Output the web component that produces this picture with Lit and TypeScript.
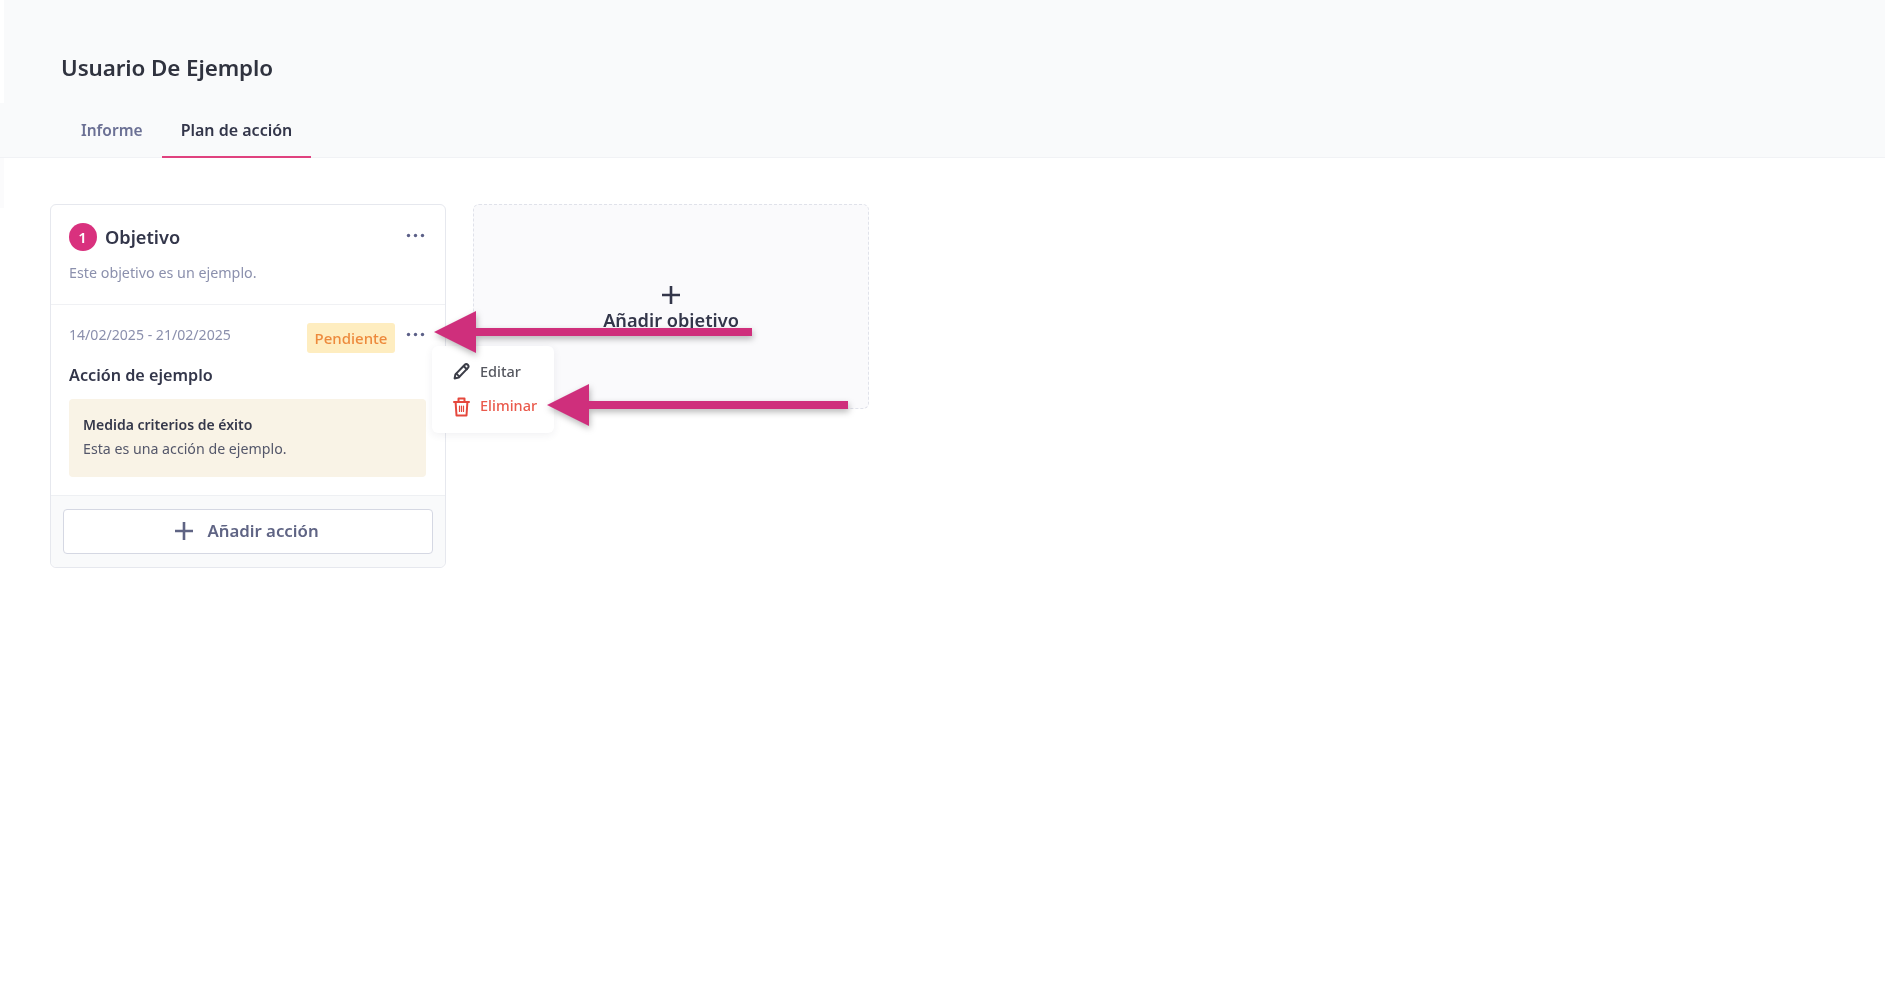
import { LitElement, html, css } from "lit";
import { customElement } from "lit/decorators.js";

const dots = html`<svg class="dots" width="19" height="5" viewBox="0 0 19 5"><circle cx="2.5" cy="2.5" r="1.7"/><circle cx="9.5" cy="2.5" r="1.7"/><circle cx="16.5" cy="2.5" r="1.7"/></svg>`;

const plus = (size: number) => html`<svg width=${size} height=${size} viewBox="0 0 18 18" fill="none" stroke="currentColor" stroke-width="2.6"><path d="M9 0v18M0 9h18"/></svg>`;

const pencil = html`<svg width="18" height="18" viewBox="0 0 18 18" fill="none" stroke="currentColor" stroke-width="2" stroke-linejoin="round" stroke-linecap="round"><path d="M1.6 16.4l.8-4 8.9-9.2c1.1-1.1 2.6-1.3 3.5-.4s.8 2.5-.3 3.6L5.7 15.5z"/><path d="M3.4 11.6l3 3M10.8 4.2l3 3"/></svg>`;

const trash = html`<svg width="17" height="20" viewBox="0 0 17 20" fill="none" stroke="currentColor" stroke-width="2" stroke-linejoin="round" stroke-linecap="round"><path d="M1 5h15M5.5 5V1.5h6V5"/><path d="M2.6 5l.9 13.5h10l.9-13.5"/><path d="M6.5 9v5.5M8.5 9v5.5M10.5 9v5.5" stroke-width="1.2"/></svg>`;

const arrow = (w: number) => html`<svg class="arrow-svg" width=${w} height="42" viewBox="0 0 ${w} 42"><path fill="#cf2f7c" d="M0 21 L42 0 V17 H${w} V25 H42 V42 Z"/></svg>`;

@customElement("app-root")
export class AppRoot extends LitElement {
  static styles = css`
    :host {
      display: block;
      position: relative;
      min-height: 992px;
      background: #fff;
      font-family: "Noto Sans", "Open Sans", sans-serif;
      color: #2f3241;
      filter: blur(0.7px);
      overflow: hidden;
    }
    .header {
      position: relative;
      background: #f9fafb;
      height: 158px;
      box-sizing: border-box;
      padding: 53px 0 0 4px;
      border-bottom: 1px solid #f1f2f5;
    }
    .header::before {
      content: "";
      position: absolute;
      left: 0;
      top: 0;
      width: 4px;
      height: 103px;
      background: #fff;
    }
    h1 {
      margin: 0 0 0 57px;
      font-size: 22.4px;
      line-height: 30px;
      font-weight: 600;
      color: #30333f;
      letter-spacing: -0.1px;
    }
    .tabs {
      display: flex;
      margin: 29px 0 0 58px;
    }
    .tab {
      box-sizing: border-box;
      height: 46px;
      padding: 6px 19px 0;
      font-size: 15.5px;
      line-height: 24px;
      font-weight: 600;
      color: #6b7094;
    }
    .tab.active {
      font-size: 16px;
      color: #33364a;
      border-bottom: 2px solid #e0417f;
    }
    .main {
      position: relative;
      display: flex;
      align-items: flex-start;
      gap: 27px;
      padding: 46px 0 0 50px;
    }
    .main::before {
      content: "";
      position: absolute;
      left: 0;
      top: 0;
      width: 4px;
      height: 50px;
      background: #fbfbfc;
    }
    .card {
      position: relative;
      box-sizing: border-box;
      width: 396px;
      background: #fff;
      border: 1px solid #e6e8ee;
      border-radius: 6px;
    }
    .card-head {
      padding: 18px 18px 22px;
      border-bottom: 1px solid #f0f1f4;
    }
    .row {
      display: flex;
      align-items: center;
    }
    .num {
      width: 28px;
      height: 28px;
      border-radius: 50%;
      background: #d9317e;
      color: #fff;
      font-size: 15px;
      font-weight: 600;
      display: flex;
      align-items: center;
      justify-content: center;
      padding-right: 1px;
      box-sizing: border-box;
    }
    .obj {
      margin-left: 8px;
      flex: 1;
      font-size: 18.2px;
      line-height: 28px;
      font-weight: 600;
      color: #33364a;
    }
    .dots {
      fill: #5c6088;
      display: block;
    }
    .head-dots {
      margin: -4px 2px 0 0;
    }
    .desc {
      margin-top: 13px;
      font-size: 14.3px;
      line-height: 18px;
      color: #8b90ad;
    }
    .action {
      padding: 18px 20px 18px 18px;
    }
    .date-row {
      display: flex;
      align-items: flex-start;
    }
    .date {
      flex: 1;
      font-size: 14.1px;
      line-height: 23px;
      color: #8b90ad;
    }
    .badge {
      box-sizing: border-box;
      height: 30px;
      width: 88px;
      padding-bottom: 1px;
      background: #feedc0;
      border-radius: 3px;
      color: #ed8a3c;
      font-size: 15px;
      font-weight: 500;
      display: flex;
      align-items: center;
      justify-content: center;
    }
    .date-row .dots {
      margin: 9px 0 0 11px;
    }
    .title {
      margin-top: 10px;
      font-size: 16.2px;
      line-height: 24px;
      font-weight: 600;
      color: #33364a;
    }
    .box {
      box-sizing: border-box;
      margin-top: 12px;
      width: 357px;
      height: 78px;
      padding: 14px 15px 0 14px;
      background: #f9f3e6;
      border-radius: 4px;
      font-size: 14.2px;
      line-height: 23px;
      color: #54576a;
    }
    .box b {
      display: block;
      font-size: 14px;
      font-weight: 600;
      color: #35384a;
      margin-bottom: 1px;
    }
    .foot {
      padding: 13px 12px 13px;
      background: #f9fafb;
      border-top: 1px solid #eef0f3;
      border-radius: 0 0 6px 6px;
    }
    .btn {
      box-sizing: border-box;
      height: 45px;
      padding-bottom: 2px;
      background: #fff;
      border: 1px solid #d5d8e3;
      border-radius: 4px;
      display: flex;
      align-items: center;
      justify-content: center;
      gap: 14px;
      color: #5f6484;
      font-size: 16.8px;
      font-weight: 600;
    }
    .btn svg {
      margin-left: -2px;
    }
    .add {
      box-sizing: border-box;
      width: 396px;
      height: 205px;
      background: #fafafc;
      border: 1.5px dashed #e0e2ea;
      border-radius: 6px;
      display: flex;
      flex-direction: column;
      align-items: center;
      padding-top: 81px;
      font-size: 18.2px;
      font-weight: 600;
      line-height: 24px;
      color: #33364a;
    }
    .add span {
      margin-top: 4px;
    }
    .menu {
      position: absolute;
      left: 381px;
      top: 141px;
      box-sizing: border-box;
      width: 122px;
      height: 87px;
      padding: 8px 0 0 21px;
      background: #fff;
      border-radius: 6px;
      box-shadow: 0 2px 8px rgba(40, 44, 70, 0.07);
      font-size: 14.5px;
      font-weight: 500;
      z-index: 2;
    }
    .item {
      display: flex;
      align-items: center;
      gap: 9px;
      height: 34px;
      color: #55575f;
    }
    .item svg {
      color: #3c3e48;
    }
    .item.danger {
      color: #ea5a4c;
    }
    .item.danger svg {
      color: #e5483d;
      margin-top: 3px;
    }
    .item.danger span {
      margin-left: 1px;
    }
    .arrow {
      position: absolute;
      z-index: 3;
      display: block;
      line-height: 0;
      filter: drop-shadow(1px 3px 3px rgba(0, 0, 0, 0.28));
    }
    .a1 {
      left: 434px;
      top: 311px;
    }
    .a2 {
      left: 547px;
      top: 384px;
    }
  `;

  render() {
    return html`
      <div class="header">
        <h1>Usuario De Ejemplo</h1>
        <div class="tabs">
          <div class="tab">Informe</div>
          <div class="tab active">Plan de acción</div>
        </div>
      </div>
      <div class="main">
        <div class="card">
          <div class="card-head">
            <div class="row">
              <div class="num">1</div>
              <div class="obj">Objetivo</div>
              <div class="head-dots">${dots}</div>
            </div>
            <div class="desc">Este objetivo es un ejemplo.</div>
          </div>
          <div class="action">
            <div class="date-row">
              <div class="date">14/02/2025 - 21/02/2025</div>
              <div class="badge">Pendiente</div>
              ${dots}
            </div>
            <div class="title">Acción de ejemplo</div>
            <div class="box">
              <b>Medida criterios de éxito</b>
              Esta es una acción de ejemplo.
            </div>
          </div>
          <div class="foot">
            <div class="btn">${plus(18)}<span>Añadir acción</span></div>
          </div>
          <div class="menu">
            <div class="item">${pencil}<span>Editar</span></div>
            <div class="item danger">${trash}<span>Eliminar</span></div>
          </div>
        </div>
        <div class="add">
          ${plus(18)}
          <span>Añadir objetivo</span>
        </div>
      </div>
      <div class="arrow a1">${arrow(318)}</div>
      <div class="arrow a2">${arrow(301)}</div>
    `;
  }
}
